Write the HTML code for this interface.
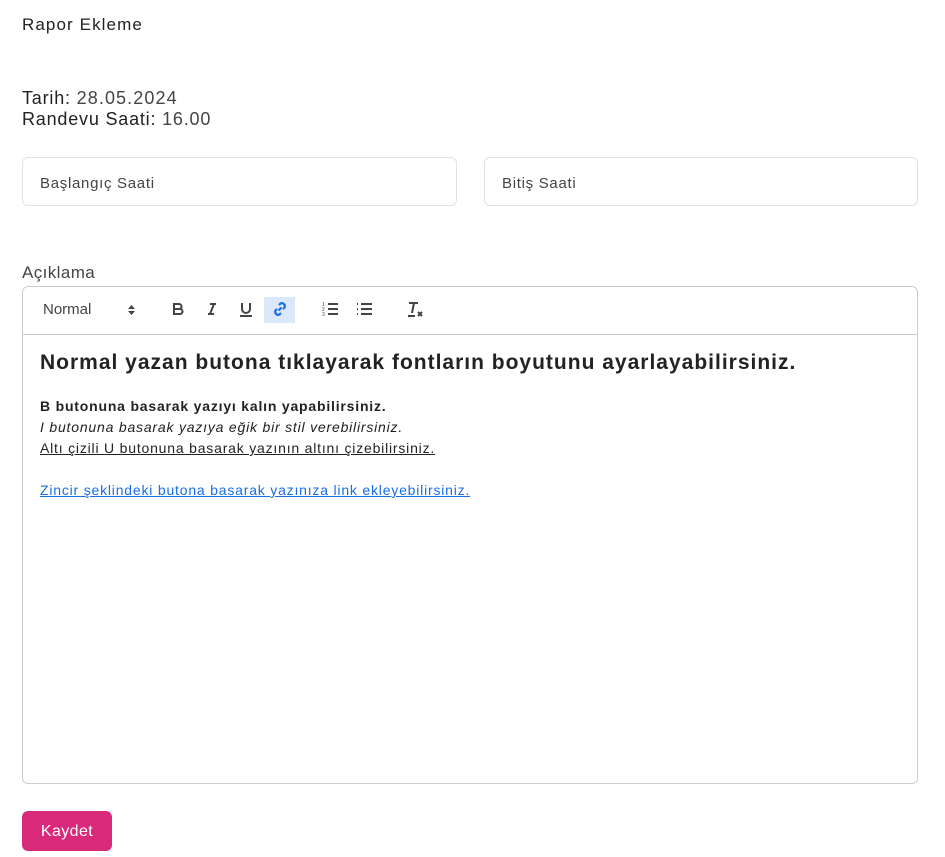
<!DOCTYPE html>
<html><head><meta charset="utf-8"><style>
body{margin:0;background:#fff;font-family:"Liberation Sans",sans-serif;color:#222;width:945px;height:857px;overflow:hidden;position:relative}
.a{position:absolute}
.inp{position:absolute;top:157px;height:49px;border:1px solid #dfe1e6;border-radius:6px;box-sizing:border-box;font-size:15px;letter-spacing:0.7px;color:#444;padding:17px 0 0 17px}
.ed{position:absolute;left:22px;top:286px;width:896px;height:498px;border:1px solid #ccc;border-radius:6px;box-sizing:border-box}
.tb{height:47px;border-bottom:1px solid #ccc;position:relative}
.ic{position:absolute;top:13px}
</style></head><body>
<div class="a" style="left:22px;top:15px;font-size:17px;letter-spacing:1.1px;color:#222">Rapor Ekleme</div>
<div class="a" style="left:22px;top:88px;font-size:18px;line-height:21px;letter-spacing:0.8px;color:#222">Tarih: <span style="color:#444;letter-spacing:1.1px">28.05.2024</span><br>Randevu Saati: <span style="color:#444">16.00</span></div>
<div class="inp" style="left:22px;width:435px">Başlangıç Saati</div>
<div class="inp" style="left:484px;width:434px">Bitiş Saati</div>
<div class="a" style="left:22px;top:263px;font-size:17px;letter-spacing:0.4px;color:#444">Açıklama</div>
<div class="ed">
<div class="tb">
<div class="a" style="left:20px;top:14px;font-size:15px;color:#444">Normal</div>
<svg class="ic" style="left:104px;top:16px" width="9" height="14"><path d="M1 6L4.5 2 8 6ZM1 8l3.5 4L8 8Z" fill="#444"/></svg>
<svg class="ic" style="left:146px" width="18" height="18" viewBox="0 0 18 18"><path d="M5 4h5a2.5 2.5 0 010 5H5zM5 9h6a2.5 2.5 0 010 5H5z" fill="none" stroke="#444" stroke-width="2"/></svg>
<svg class="ic" style="left:180px" width="18" height="18"><path d="M7 4h6M5 14h6M11 4L7 14" stroke="#444" stroke-width="2"/></svg>
<svg class="ic" style="left:214px" width="18" height="18"><path d="M5 3v6a4 4 0 008 0V3M3 16h12" fill="none" stroke="#444" stroke-width="2"/></svg>
<div class="a" style="left:241px;top:10px;width:31px;height:26px;background:#dbe8fb"></div>
<svg class="ic" style="left:248px" width="18" height="18"><path d="M7.5 10.5l3-3M8 5l1.5-1.5a3 3 0 014 4L12 9M10 13l-1.5 1.5a3 3 0 01-4-4L6 9" fill="none" stroke="#1a6ee6" stroke-width="2.2"/></svg>
<svg class="ic" style="left:298px" width="18" height="18"><path d="M7 4h10M7 9h10M7 14h10" stroke="#444" stroke-width="2"/><text x="1" y="6" font-size="5" fill="#444">1</text><text x="1" y="11" font-size="5" fill="#444">2</text><text x="1" y="16" font-size="5" fill="#444">3</text></svg>
<svg class="ic" style="left:332px" width="18" height="18"><path d="M6 4h11M6 9h11M6 14h11M2 4h1M2 9h1M2 14h1" stroke="#444" stroke-width="2"/></svg>
<svg class="ic" style="left:382px" width="20" height="20"><path d="M4 3h9M9 3L7 13M3 16h7M13 12l4 4M17 12l-4 4" stroke="#444" stroke-width="2"/></svg>
</div>
<div style="padding:14px 17px;font-size:14px;line-height:21px;letter-spacing:0.8px;color:#222">
<div style="font-size:21px;font-weight:bold;line-height:28px;letter-spacing:1px;margin-bottom:19px">Normal yazan butona tıklayarak fontların boyutunu ayarlayabilirsiniz.</div>
<div style="font-weight:bold">B butonuna basarak yazıyı kalın yapabilirsiniz.</div>
<div style="font-style:italic">I butonuna basarak yazıya eğik bir stil verebilirsiniz.</div>
<div style="text-decoration:underline">Altı çizili U butonuna basarak yazının altını çizebilirsiniz.</div>
<div>&nbsp;</div>
<div style="color:#1a6ee6;text-decoration:underline">Zincir şeklindeki butona basarak yazınıza link ekleyebilirsiniz.</div>
</div>
</div>
<div class="a" style="left:22px;top:811px;width:90px;height:40px;background:#d9297a;border-radius:6px;color:#fff;font-size:16px;letter-spacing:0.4px;text-align:center;line-height:42px">Kaydet</div>
</body></html>
